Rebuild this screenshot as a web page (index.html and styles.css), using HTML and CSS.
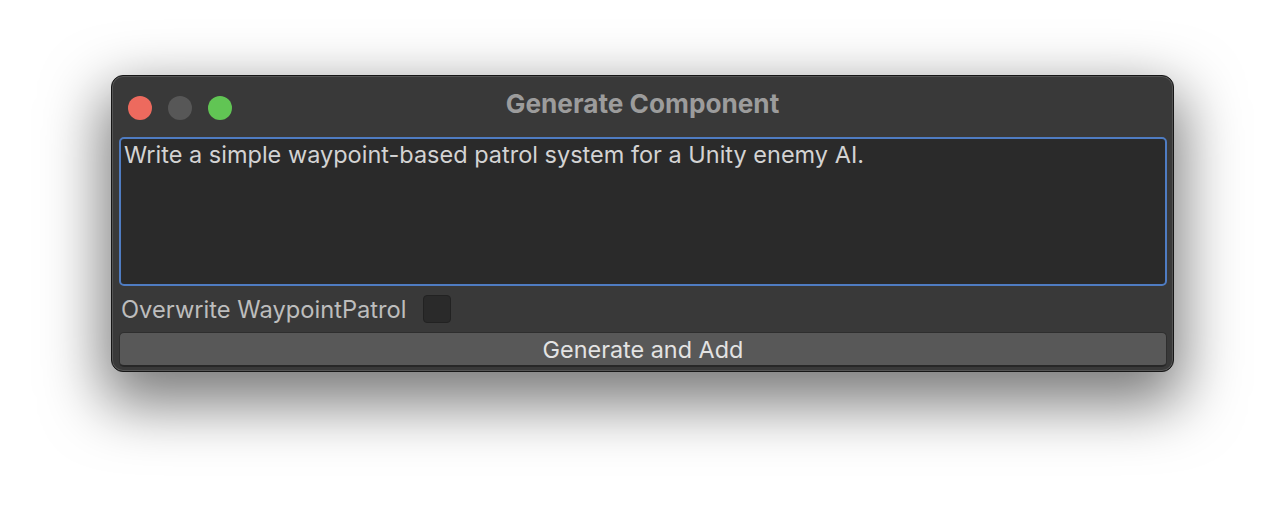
FILE: index.html
```html
<!DOCTYPE html>
<html>
<head>
<meta charset="utf-8">
<link rel="stylesheet" href="styles.css">
</head>
<body>
<div class="window">
  <div class="titlebar">
    <div class="lights">
      <span class="light red"></span>
      <span class="light gray"></span>
      <span class="light green"></span>
    </div>
    <div class="title">Generate Component</div>
    <div></div>
  </div>
  <div class="content">
    <div class="prompt">Write a simple waypoint-based patrol system for a Unity enemy AI.</div>
    <div class="option">
      <span class="label">Overwrite WaypointPatrol</span>
      <span class="checkbox"></span>
    </div>
    <div class="button">Generate and Add</div>
  </div>
</div>
</body>
</html>
```
FILE: styles.css
```css
* { box-sizing: border-box; }
html, body { margin: 0; padding: 0; background: #ffffff; }
body {
  width: 1286px;
  height: 520px;
  overflow: hidden;
  padding: 75px 0 0 111px;
  font-family: Inter, "Noto Sans", sans-serif;
}
.window {
  width: 1063px;
  height: 297px;
  background: #393939;
  border: 1px solid #161616;
  border-radius: 12px;
  box-shadow: inset 0 0 0 1px rgba(255,255,255,0.14), 0 24px 60px 8px rgba(0,0,0,0.52);
  display: flex;
  flex-direction: column;
}
.titlebar {
  height: 61px;
  display: grid;
  grid-template-columns: 1fr auto 1fr;
  align-items: center;
  padding: 0 16px;
}
.lights { display: flex; gap: 16px; padding-top: 3px; }
.light { width: 24px; height: 24px; border-radius: 50%; display: block; }
.red { background: #ed6a5e; }
.gray { background: #575757; }
.green { background: #61c554; }
.title {
  font-weight: 700;
  font-size: 26.2px;
  color: #9c9c9c;
  padding-bottom: 6px;
}
.content {
  padding: 0 6px 0 7px;
  display: flex;
  flex-direction: column;
}
.prompt {
  height: 149px;
  background: #2a2a2a;
  border: 2px solid #4f7cc2;
  border-radius: 5px;
  color: #d3d3d3;
  font-size: 23.5px;
  line-height: 28px;
  padding: 2px 3px;
}
.option {
  height: 46px;
  display: flex;
  align-items: center;
  padding-left: 2px;
  gap: 16px;
}
.label { color: #bdbdbd; font-size: 23.7px; }
.checkbox {
  width: 28px;
  height: 28px;
  background: #2a2a2a;
  border: 1px solid #222;
  border-radius: 4px;
  display: block;
}
.button {
  height: 35px;
  background: #585858;
  border: 1px solid #2e2e2e;
  border-bottom: 2px solid #272727;
  border-radius: 5px;
  color: #e3e3e3;
  font-size: 23.4px;
  display: flex;
  align-items: center;
  justify-content: center;
}
```
